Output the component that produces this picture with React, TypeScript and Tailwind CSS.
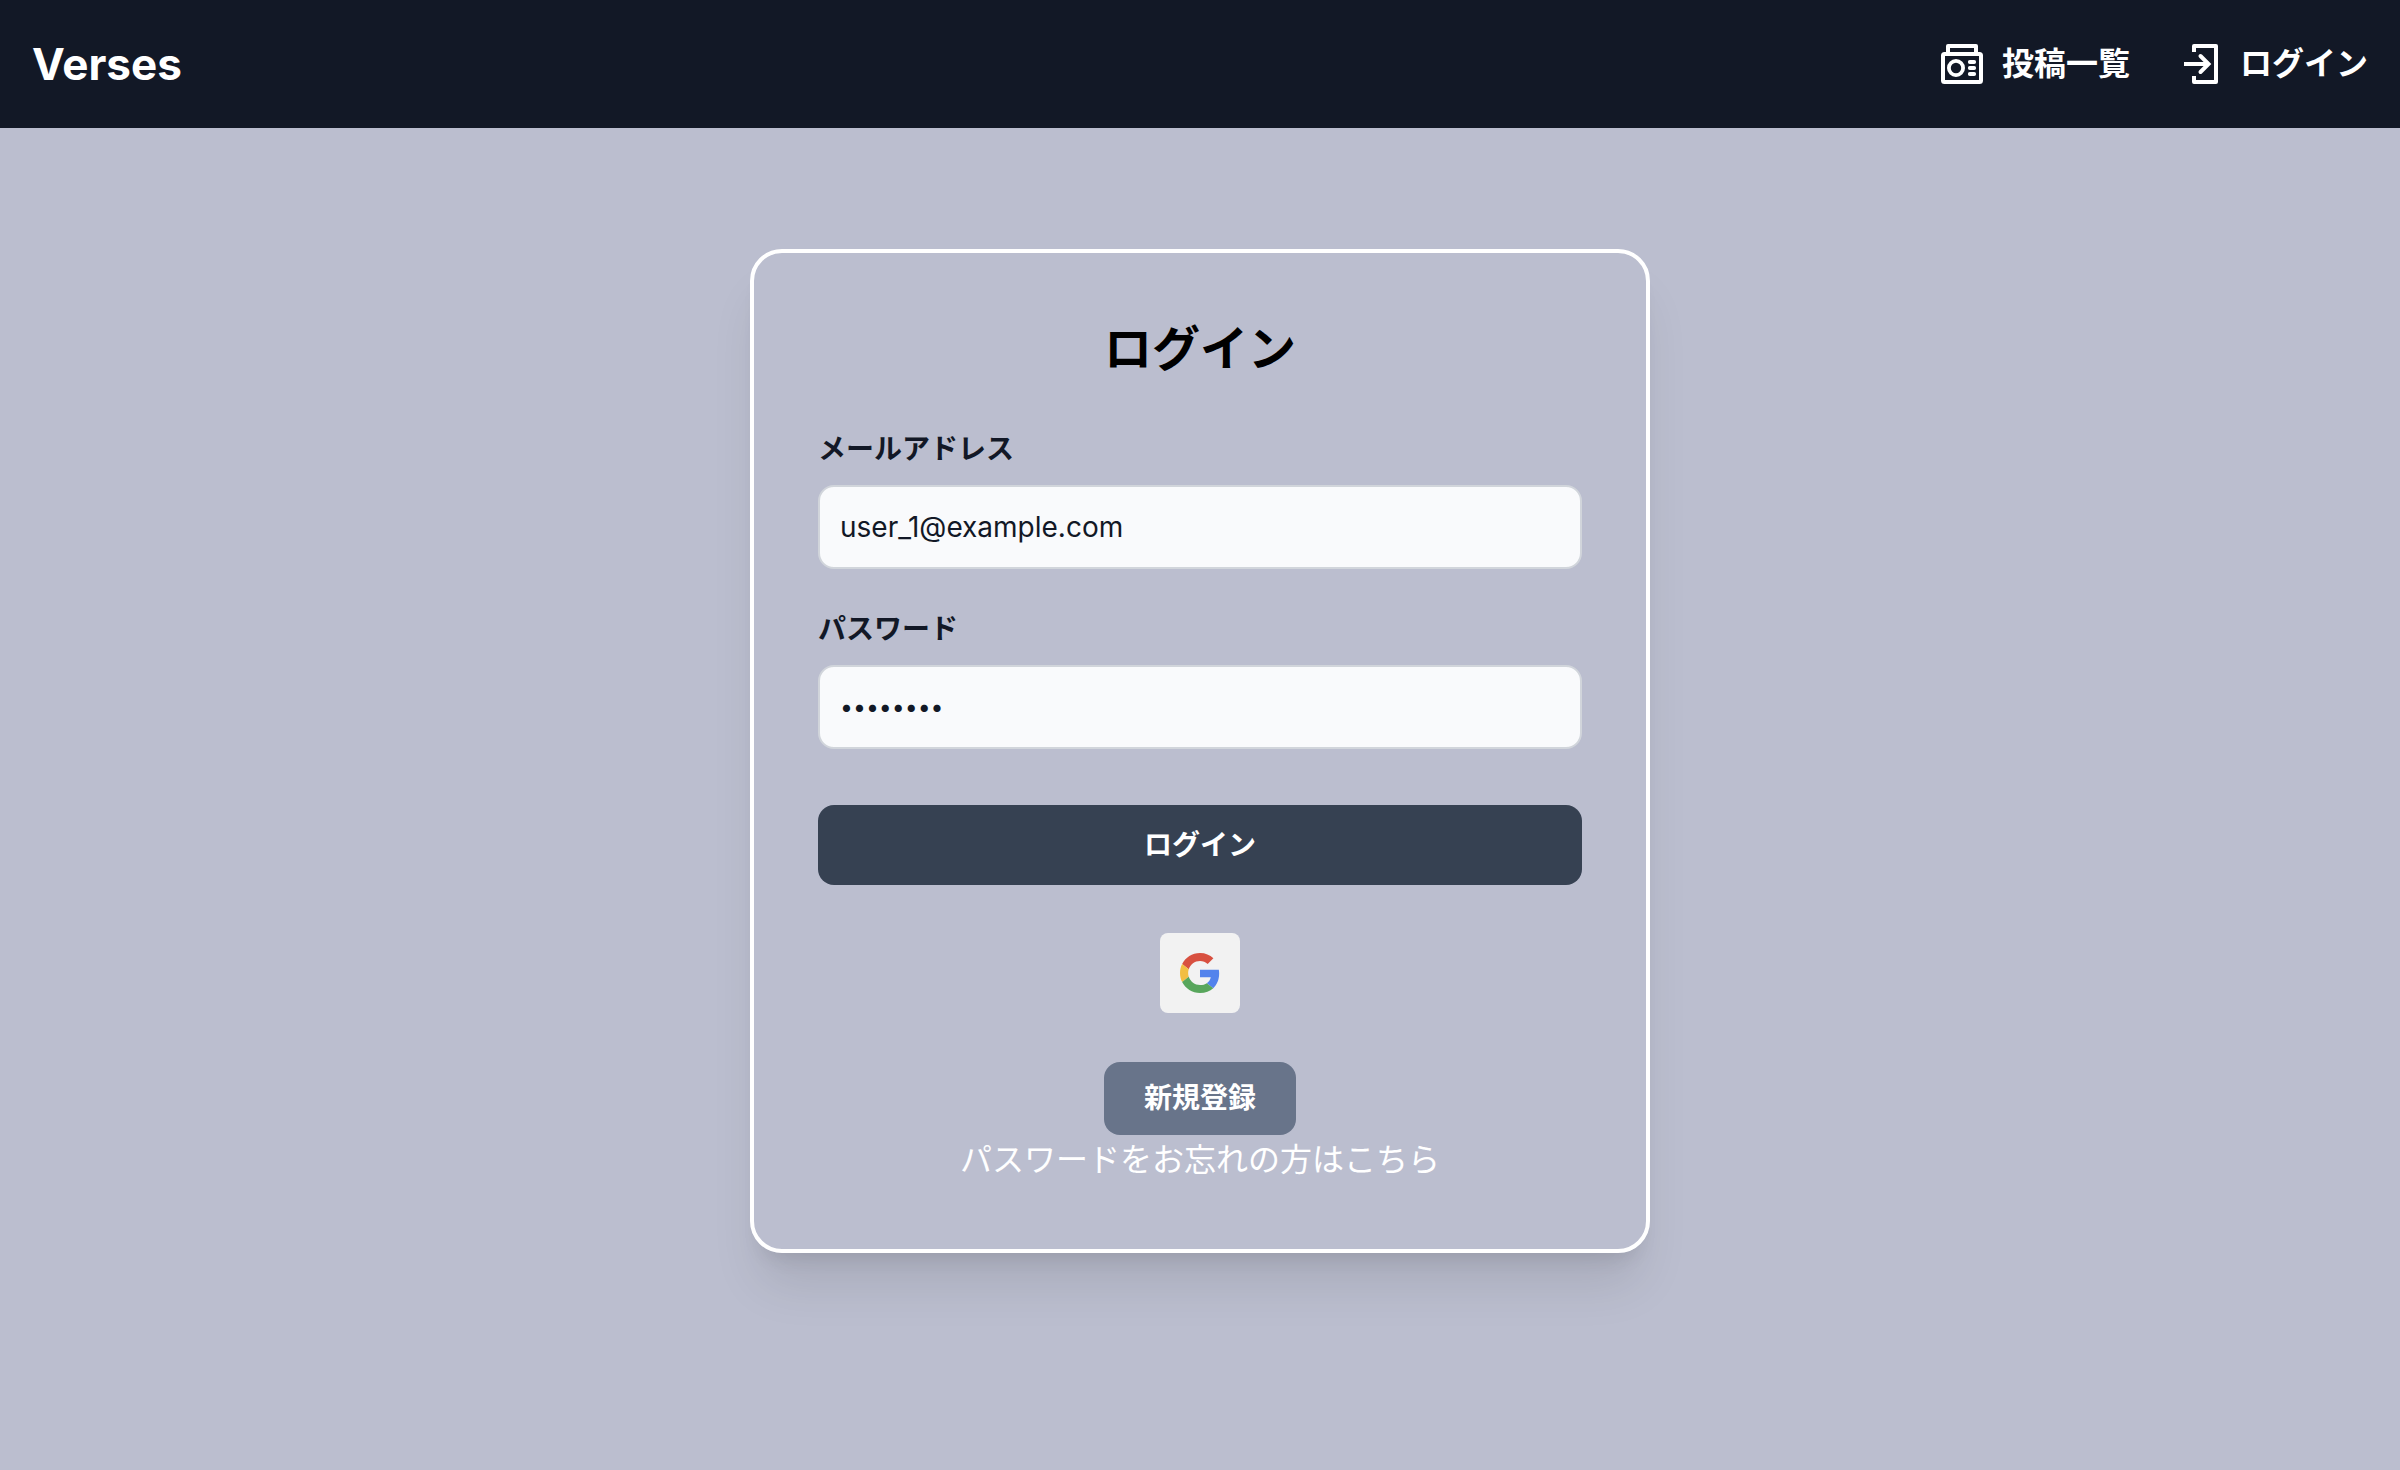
import { useState } from "react";

function RadioIcon() {
  return (
    <svg className="size-12" viewBox="0 0 48 48" fill="none" stroke="currentColor" strokeWidth="4" strokeLinejoin="round" aria-hidden="true">
      <rect x="5" y="14" width="38" height="28" rx="1.5" />
      <path d="M10 14V6H38V14" />
      <circle cx="18" cy="28" r="7.1" strokeWidth="3.8" />
      <path d="M31.8 22H36.2M31.8 28H36.2M31.8 34H36.2" strokeWidth="3.8" strokeLinecap="round" />
    </svg>
  );
}

function EnterIcon() {
  return (
    <svg className="size-12" viewBox="0 0 48 48" fill="none" stroke="currentColor" strokeWidth="4" strokeLinejoin="round" aria-hidden="true">
      <path d="M18 12V6H40V42H18V36" />
      <path d="M8 24H32" />
      <path d="M24.5 16L32.5 24L24.5 32" strokeLinejoin="miter" strokeLinecap="round" />
    </svg>
  );
}

function GoogleIcon() {
  return (
    <svg className="size-10" viewBox="0 0 48 48" aria-hidden="true">
      <path fill="#d85040" d="M24 9.5c3.54 0 6.71 1.22 9.21 3.6l6.85-6.85C35.9 2.38 30.47 0 24 0 14.62 0 6.51 5.38 2.56 13.22l7.98 6.19C12.43 13.72 17.74 9.5 24 9.5z" />
      <path fill="#5383ec" d="M46.98 24.55c0-1.57-.15-3.09-.38-4.55H24v9.02h12.94c-.58 2.96-2.26 5.48-4.78 7.18l7.73 6c4.51-4.18 7.09-10.36 7.09-17.65z" />
      <path fill="#f2be42" d="M10.53 28.59c-.48-1.45-.76-2.99-.76-4.59s.27-3.14.76-4.59l-7.98-6.19C.92 16.46 0 20.12 0 24c0 3.88.92 7.54 2.56 10.78l7.97-6.19z" />
      <path fill="#58a65c" d="M24 48c6.48 0 11.93-2.13 15.89-5.81l-7.73-6c-2.15 1.45-4.92 2.3-8.16 2.3-6.26 0-11.57-4.22-13.47-9.91l-7.98 6.19C6.51 42.62 14.62 48 24 48z" />
    </svg>
  );
}

type FieldProps = {
  id: string;
  label: string;
  type: string;
  value: string;
  onChange: (value: string) => void;
};

function Field({ id, label, type, value, onChange }: FieldProps) {
  return (
    <div className="flex flex-col gap-4">
      <label htmlFor={id} className="text-[28px] leading-10 font-bold text-[#121826]">
        {label}
      </label>
      <input
        id={id}
        type={type}
        value={value}
        onChange={(e) => onChange(e.target.value)}
        className={`h-[84px] w-full rounded-2xl border-2 border-[#d1d5db] bg-[#f9fafc] px-5 text-[#121826] ${
          type === "password" ? "text-[23px]" : "text-[28px]"
        }`}
      />
    </div>
  );
}

export default function App() {
  const [email, setEmail] = useState("user_1@example.com");
  const [password, setPassword] = useState("password");

  return (
    <div className="min-h-screen bg-[#bbbecf] font-['Inter','Noto_Sans_CJK_JP',sans-serif]">
      <header className="flex h-32 items-center justify-between bg-[#121826] px-8 text-white">
        <a href="#" className="text-[44px] leading-16 font-bold">
          Verses
        </a>
        <nav className="flex gap-[46px] text-[32px] leading-12 font-bold">
          <a href="#posts" className="flex items-center gap-4">
            <RadioIcon />
            投稿一覧
          </a>
          <a href="#login" className="flex items-center gap-4">
            <EnterIcon />
            ログイン
          </a>
        </nav>
      </header>

      <main className="px-8 pt-[121px] pb-16">
        <section className="mx-auto flex max-w-[900px] flex-col items-center rounded-[32px] border-4 border-white p-16 shadow-[0_40px_50px_-10px_rgb(0_0_0/0.1),0_16px_20px_-12px_rgb(0_0_0/0.1)]">
          <h1 className="text-5xl leading-16 font-bold text-black">ログイン</h1>
          <form className="mt-12 w-full" onSubmit={(e) => e.preventDefault()}>
            <div className="flex flex-col gap-10">
              <Field id="email" label="メールアドレス" type="email" value={email} onChange={setEmail} />
              <Field id="password" label="パスワード" type="password" value={password} onChange={setPassword} />
            </div>
            <button type="submit" className="mt-14 h-20 w-full rounded-2xl bg-[#364152] text-[28px] leading-10 font-bold text-white">
              ログイン
            </button>
          </form>
          <button type="button" aria-label="Google" className="mt-12 flex size-20 items-center justify-center rounded-lg bg-[#f2f2f2]">
            <GoogleIcon />
          </button>
          <a href="#signup" className="mt-[49px] rounded-2xl bg-[#68748a] px-10 py-4 text-[28px] leading-[41px] font-bold text-white">
            新規登録
          </a>
          <a href="#reset" className="text-[32px] leading-[50px] text-white">
            パスワードをお忘れの方はこちら
          </a>
        </section>
      </main>
    </div>
  );
}
